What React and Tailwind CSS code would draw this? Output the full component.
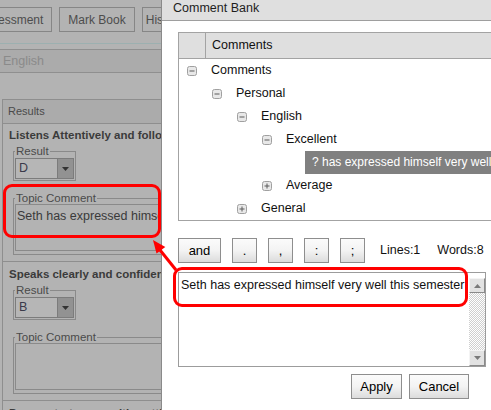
import React from "react";

function TreeIcon({ plus }) {
  return (
    <svg width="10" height="10" viewBox="0 0 10 10" className="shrink-0">
      <rect x="0.5" y="0.5" width="9" height="9" rx="2" fill="#e8e8e8" stroke="#a0a0a0" />
      <line x1="2.5" y1="5" x2="7.5" y2="5" stroke="#5a5a5a" strokeWidth="1" />
      {plus && <line x1="5" y1="2.5" x2="5" y2="7.5" stroke="#5a5a5a" strokeWidth="1" />}
    </svg>
  );
}

function TreeRow({ pad, plus, label }) {
  return (
    <div className={`flex items-center h-[23px] ${pad}`}>
      <TreeIcon plus={plus} />
      <span className="ml-[14px] text-[12.5px] text-[#111] whitespace-nowrap">{label}</span>
    </div>
  );
}

function Btn({ children, w }) {
  return (
    <div
      className={`${w} h-[25px] shrink-0 flex items-center justify-center border border-[#8e8e8e] bg-linear-to-b from-[#fbfbfb] via-[#f3f3f3] to-[#dcdcdc] text-[13px] text-black`}
    >
      {children}
    </div>
  );
}

function LeftSelect({ value }) {
  return (
    <div className="mt-[1px] ml-[1px] flex h-[21px] w-[59px] border border-[#7c7c7c] bg-[#b6b6b6]">
      <div className="flex-1 pl-[3px] text-[12.5px] leading-[19px] text-[#3a3a4a]">{value}</div>
      <div className="w-[16px] bg-[#929292] border-l border-[#7c7c7c] flex items-center justify-center">
        <svg width="7" height="4" viewBox="0 0 7 4">
          <path d="M0 0h7L3.5 4z" fill="#333" />
        </svg>
      </div>
    </div>
  );
}

function Section({ title, value, comment, first }) {
  return (
    <div className={first ? "pt-[4px] pb-[6px] border-b border-[#8e8e8e]" : "pt-[5px] pb-[6px] border-b border-[#8e8e8e]"}>
      <div className="pl-[6px] text-[11.5px] leading-[14px] font-bold text-[#3b3b3b] whitespace-nowrap">{title}</div>
      {value !== undefined && (
        <>
          <fieldset className="mt-[3px] ml-[10px] w-[63px] border border-[#8a8a8a] pb-[1px]">
            <legend className="ml-[1px] px-[1px] text-[11.5px] leading-[12px] text-[#4a4a4a]">Result</legend>
            <LeftSelect value={value} />
          </fieldset>
          <fieldset className="mt-[11px] ml-[10px] w-[190px] border border-[#8a8a8a] pb-[3px]">
            <legend className="ml-[1px] px-[1px] text-[11.5px] leading-[12px] text-[#4a4a4a]">Topic Comment</legend>
            <div className="ml-[1px] h-[47px] border border-[#8a8a8a] pl-[1px] pt-[4px] text-[12.5px] leading-[15px] text-[#3a3a3a] whitespace-nowrap">
              {comment}
            </div>
          </fieldset>
        </>
      )}
    </div>
  );
}

export default function App() {
  return (
    <div className="relative w-[491px] h-[410px] overflow-hidden flex font-['Liberation_Sans',Arial,sans-serif]">
      {/* Left (masked) page */}
      <div className="w-[161px] shrink-0 h-full overflow-hidden bg-[#b3b3b3]">
        <div className="flex gap-[7px] pt-[7px]">
          <div className="-ml-[31px] shrink-0 h-[25px] px-[8px] border border-[#868686] flex items-center text-[12px] text-[#4d4d4d] whitespace-nowrap">
            Assessment
          </div>
          <div className="shrink-0 h-[25px] px-[8px] border border-[#868686] flex items-center text-[12px] text-[#4d4d4d] whitespace-nowrap">
            Mark Book
          </div>
          <div className="shrink-0 h-[25px] px-[3px] border border-[#868686] flex items-center text-[12px] text-[#4d4d4d] whitespace-nowrap">
            History
          </div>
        </div>
        <div className="mt-[11px] h-[6px] border-t border-[#9cb0b0]" />
        <div className="h-[24px] border-t border-b border-[#8f8f8f] bg-[#ababab] pl-[3px] text-[12.5px] leading-[22px] text-[#8a8a8a]">
          English
        </div>
        <div className="mt-[26px] ml-[2px] border-l border-t border-[#8e8e8e]">
          <div className="h-[24px] border-b border-[#8e8e8e] bg-[#ababab] pl-[5px] text-[11px] leading-[23px] text-[#4a4a4a]">
            Results
          </div>
          <Section first title="Listens Attentively and following instructions" value="D" comment="Seth has expressed himself very well this semester" />
          <Section title="Speaks clearly and confidently" value="B" comment="" />
          <Section title="Demonstrates a positive attitude" />
        </div>
      </div>

      {/* Dialog */}
      <div className="flex-1 h-full bg-white border-l border-[#8a8a8a] overflow-hidden">
        <div className="h-[21px] bg-[#dfdfdf] border-b border-[#9e9e9e] pl-[11px] text-[12.5px] leading-[16px] text-[#1e1e1e] whitespace-nowrap">
          Comment Bank
        </div>
        <div className="pl-[16px] pt-[11px]">
          <div className="w-[340px] border border-[#a3a3a3]">
            <div className="flex h-[26px] bg-[#dfdfdf] border-b border-[#a3a3a3]">
              <div className="w-[27px] border-r border-[#a3a3a3]" />
              <div className="pl-[6px] flex items-center text-[12.5px] text-[#111]">Comments</div>
            </div>
            <div className="h-[161px] overflow-hidden">
              <TreeRow pad="pl-[8px]" label="Comments" />
              <TreeRow pad="pl-[33px]" label="Personal" />
              <TreeRow pad="pl-[58px]" label="English" />
              <TreeRow pad="pl-[83px]" label="Excellent" />
              <div className="h-[23px] pl-[126px] flex">
                <div className="flex-1 bg-[#808080] px-[7px] text-[12px] leading-[22px] text-white whitespace-nowrap overflow-hidden">
                  ? has expressed himself very well this semester
                </div>
              </div>
              <TreeRow pad="pl-[83px]" plus label="Average" />
              <TreeRow pad="pl-[58px]" plus label="General" />
            </div>
          </div>

          <div className="mt-[17px] flex items-center gap-[11px]">
            <Btn w="w-[43px]">and</Btn>
            <Btn w="w-[25px]">.</Btn>
            <Btn w="w-[25px]">,</Btn>
            <Btn w="w-[25px]">:</Btn>
            <Btn w="w-[25px]">;</Btn>
            <span className="ml-[4px] text-[12.5px] text-[#111] whitespace-nowrap">Lines:1</span>
            <span className="ml-[6px] text-[12.5px] text-[#111] whitespace-nowrap">Words:8</span>
          </div>

          <div className="mt-[9px] w-[308px] h-[95px] border border-[#9c9c9c] flex">
            <div className="flex-1 pl-[2px] pt-[5px] text-[12.5px] leading-[15px] text-[#111] whitespace-nowrap overflow-hidden">
              Seth has expressed himself very well this semester
            </div>
            <div className="w-[16px] flex flex-col pt-[5px]">
              <div className="h-[15px] border border-t-[#f4f4f4] border-l-[#f4f4f4] border-r-[#8a8a8a] border-b-[#8a8a8a] bg-[#e2e2e2] flex items-center justify-center">
                <svg width="7" height="4" viewBox="0 0 7 4">
                  <path d="M0 4h7L3.5 0z" fill="#7a7a7a" />
                </svg>
              </div>
              <div className="flex-1 bg-[image:repeating-conic-gradient(#cfcfcf_0%_25%,#ffffff_0%_50%)] bg-[length:2px_2px]" />
              <div className="h-[16px] border border-t-[#f4f4f4] border-l-[#f4f4f4] border-r-[#8a8a8a] border-b-[#8a8a8a] bg-[#e2e2e2] flex items-center justify-center">
                <svg width="7" height="4" viewBox="0 0 7 4">
                  <path d="M0 0h7L3.5 4z" fill="#7a7a7a" />
                </svg>
              </div>
            </div>
          </div>

          <div className="mt-[7px] flex justify-end gap-[7px] pr-[22px]">
            <Btn w="w-[51px]">Apply</Btn>
            <Btn w="w-[60px]">Cancel</Btn>
          </div>
        </div>
      </div>

      {/* Annotations */}
      <div className="absolute left-[3px] top-[184px] w-[158px] h-[54px] border-[3px] border-[#ff0000] rounded-[9px] pointer-events-none" />
      <div className="absolute left-[173px] top-[267px] w-[295px] h-[40px] border-[3px] border-[#ff0000] rounded-[9px] pointer-events-none" />
      <svg className="absolute left-0 top-0 pointer-events-none" width="491" height="410" viewBox="0 0 491 410">
        <line x1="176" y1="270" x2="160" y2="250" stroke="#ff0000" strokeWidth="3" />
        <polygon points="153,240 165.3,247 156.5,253.6" fill="#ff0000" />
      </svg>
    </div>
  );
}
